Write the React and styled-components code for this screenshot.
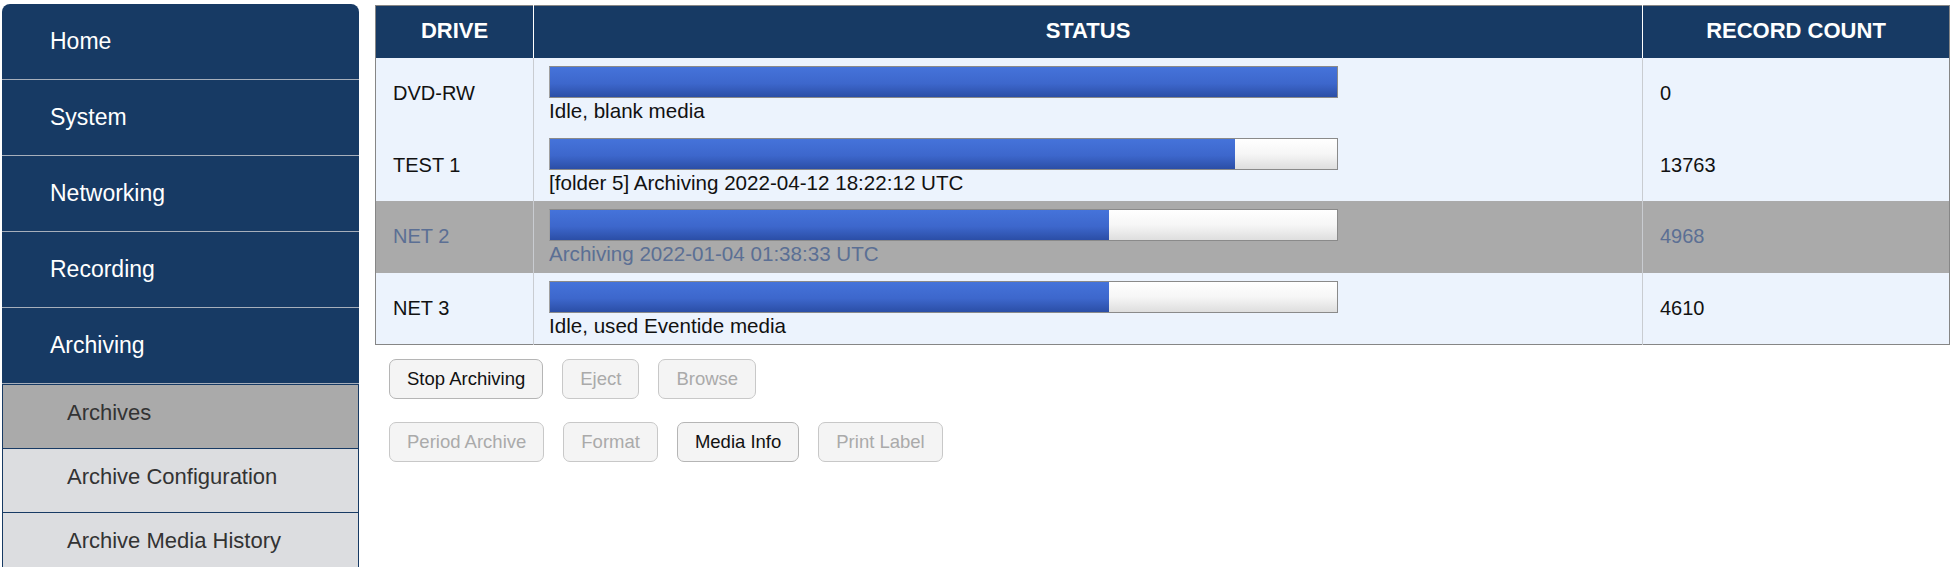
import React from 'react'
import styled, { createGlobalStyle } from 'styled-components'

const GlobalStyle = createGlobalStyle`
  html, body {
    margin: 0;
    padding: 0;
    background: #ffffff;
    font-family: "Liberation Sans", Arial, sans-serif;
  }
`

const Page = styled.div`
  display: flex;
  align-items: flex-start;
  gap: 16px;
  padding: 4px 6px 0 2px;
  height: 563px;
  overflow: hidden;
`

const Sidebar = styled.nav`
  flex: 0 0 357px;
  display: flex;
  flex-direction: column;
  border-radius: 8px 8px 0 0;
  overflow: hidden;
`

const MainItem = styled.div`
  display: flex;
  align-items: center;
  padding-left: 48px;
  padding-bottom: 1px;
  box-sizing: border-box;
  height: 76px;
  background: #173a64;
  color: #ffffff;
  font-size: 23px;
  border-bottom: 1px solid #a7afbb;
`

const SubItem = styled.div`
  display: flex;
  align-items: center;
  padding-left: 64px;
  padding-bottom: 7px;
  box-sizing: border-box;
  height: ${p => (p.first ? 65 : 64)}px;
  background: ${p => (p.active ? '#aaaaaa' : '#dcdde0')};
  color: #333333;
  font-size: 22px;
  border: 1px solid #173a64;
  border-top: ${p => (p.first ? '1px solid #173a64' : 'none')};
`

const Content = styled.div`
  flex: 1;
  display: flex;
  flex-direction: column;
  padding-top: 1px;
`

const Table = styled.table`
  width: 100%;
  border-collapse: collapse;
  border: 1px solid #868686;
`

const HeadCell = styled.th`
  height: 50px;
  padding: 0 0 2px;
  background: #173a64;
  color: #ffffff;
  font-size: 22px;
  font-weight: bold;
  text-align: center;
  border-left: 1px solid #ffffff;
  width: ${p => p.w || 'auto'};
  &:first-child {
    border-left: none;
  }
`

const Row = styled.tr`
  background: ${p => (p.muted ? '#aaaaaa' : '#ecf3fd')};
  color: ${p => (p.muted ? '#5b6f94' : '#111111')};
`

const Cell = styled.td`
  padding: 0 16px 0 17px;
  font-size: 20px;
  vertical-align: middle;
  border-left: 1px solid #c9ccd1;
  &:first-child {
    border-left: none;
  }
`

const StatusCell = styled.td`
  padding: 8px 16px 5px 15px;
  font-size: 20.6px;
  vertical-align: top;
  border-left: 1px solid #c9ccd1;
`

const Bar = styled.div`
  width: 789px;
  height: 32px;
  box-sizing: border-box;
  border: 1px solid #8a8a8a;
  border-left-color: #a0a0a0;
  background: linear-gradient(to bottom, #ffffff 0%, #f6f6f6 50%, #dedede 100%);
`

const Fill = styled.div`
  height: 100%;
  background: linear-gradient(to bottom, #4573da 0%, #3d67cc 55%, #2b4ea6 100%);
`

const StatusText = styled.div`
  line-height: 26px;
  height: 26.5px;
  white-space: nowrap;
`

const Buttons = styled.div`
  display: flex;
  gap: 19px;
  padding-left: 14px;
  margin-top: ${p => p.top}px;
`

const Button = styled.button`
  height: 40px;
  padding: 0 17px;
  font-family: "Liberation Sans", Arial, sans-serif;
  font-size: 18.5px;
  background: #f4f4f4;
  color: ${p => (p.disabled ? '#aaaaaa' : '#111111')};
  border: 1px solid ${p => (p.disabled ? '#c8c8c8' : '#b5b5b5')};
  border-radius: 7px;
  cursor: ${p => (p.disabled ? 'default' : 'pointer')};
`

const drives = [
  { name: 'DVD-RW', fill: 100, status: 'Idle, blank media', count: '0' },
  { name: 'TEST 1', fill: 87, status: '[folder 5] Archiving 2022-04-12 18:22:12 UTC', count: '13763' },
  { name: 'NET 2', fill: 71, status: 'Archiving 2022-01-04 01:38:33 UTC', count: '4968', muted: true },
  { name: 'NET 3', fill: 71, status: 'Idle, used Eventide media', count: '4610' }
]

const menu = ['Home', 'System', 'Networking', 'Recording', 'Archiving']
const subMenu = ['Archives', 'Archive Configuration', 'Archive Media History']

export default function App () {
  return (
    <>
      <GlobalStyle />
      <Page>
        <Sidebar>
          {menu.map(item => <MainItem key={item}>{item}</MainItem>)}
          {subMenu.map((item, i) => (
            <SubItem key={item} first={i === 0} active={i === 0}>{item}</SubItem>
          ))}
        </Sidebar>
        <Content>
          <Table>
            <thead>
              <tr>
                <HeadCell w='157px'>DRIVE</HeadCell>
                <HeadCell>STATUS</HeadCell>
                <HeadCell w='306px'>RECORD COUNT</HeadCell>
              </tr>
            </thead>
            <tbody>
              {drives.map(d => (
                <Row key={d.name} muted={d.muted}>
                  <Cell>{d.name}</Cell>
                  <StatusCell>
                    <Bar>
                      <Fill style={{ width: `${d.fill}%` }} />
                    </Bar>
                    <StatusText>{d.status}</StatusText>
                  </StatusCell>
                  <Cell>{d.count}</Cell>
                </Row>
              ))}
            </tbody>
          </Table>
          <Buttons top={14}>
            <Button>Stop Archiving</Button>
            <Button disabled>Eject</Button>
            <Button disabled>Browse</Button>
          </Buttons>
          <Buttons top={23}>
            <Button disabled>Period Archive</Button>
            <Button disabled>Format</Button>
            <Button>Media Info</Button>
            <Button disabled>Print Label</Button>
          </Buttons>
        </Content>
      </Page>
    </>
  )
}
